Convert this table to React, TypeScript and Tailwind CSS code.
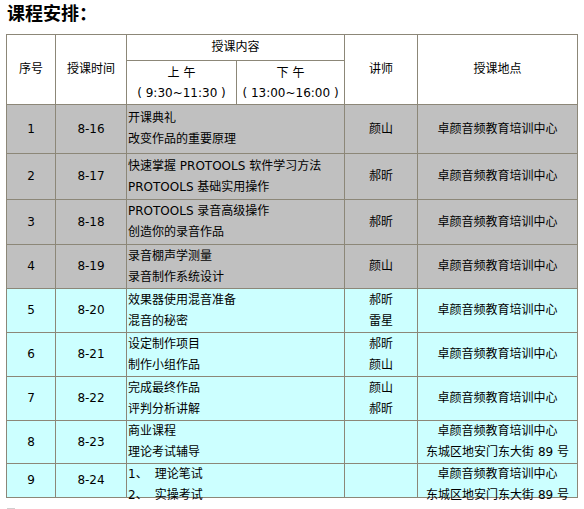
import type { ReactNode } from 'react';

type Row = {
  no: string;
  date: string;
  content: ReactNode[];
  teacher: string[];
  place: string[];
  height: string;
  bg: string;
};

const GRAY = 'bg-[#c0c0c0]';
const CYAN = 'bg-[#ccffff]';

const rows: Row[] = [
  { no: '1', date: '8-16', content: ['开课典礼', '改变作品的重要原理'], teacher: ['颜山'], place: ['卓颜音频教育培训中心'], height: 'h-[49px]', bg: GRAY },
  { no: '2', date: '8-17', content: ['快速掌握 PROTOOLS 软件学习方法', 'PROTOOLS 基础实用操作'], teacher: ['郝昕'], place: ['卓颜音频教育培训中心'], height: 'h-[46px]', bg: GRAY },
  { no: '3', date: '8-18', content: ['PROTOOLS 录音高级操作', '创造你的录音作品'], teacher: ['郝昕'], place: ['卓颜音频教育培训中心'], height: 'h-[45px]', bg: GRAY },
  { no: '4', date: '8-19', content: ['录音棚声学测量', '录音制作系统设计'], teacher: ['颜山'], place: ['卓颜音频教育培训中心'], height: 'h-[44px]', bg: GRAY },
  { no: '5', date: '8-20', content: ['效果器使用混音准备', '混音的秘密'], teacher: ['郝昕', '雷星'], place: ['卓颜音频教育培训中心'], height: 'h-[44px]', bg: CYAN },
  { no: '6', date: '8-21', content: ['设定制作项目', '制作小组作品'], teacher: ['郝昕', '颜山'], place: ['卓颜音频教育培训中心'], height: 'h-[44px]', bg: CYAN },
  { no: '7', date: '8-22', content: ['完成最终作品', '评判分析讲解'], teacher: ['颜山', '郝昕'], place: ['卓颜音频教育培训中心'], height: 'h-[44px]', bg: CYAN },
  { no: '8', date: '8-23', content: ['商业课程', '理论考试辅导'], teacher: [], place: ['卓颜音频教育培训中心', '东城区地安门东大街 89 号'], height: 'h-[43px]', bg: CYAN },
];

const cell = 'border border-[#8c8778] p-0 align-middle';

function Lines({ items }: { items: ReactNode[] }) {
  return (
    <>
      {items.map((t, i) => (
        <div key={i}>{t}</div>
      ))}
    </>
  );
}

export default function App() {
  return (
    <div className="bg-white w-[584px] h-[509px] overflow-hidden px-[6px] text-black font-['DejaVu_Sans','Noto_Sans_CJK_SC',sans-serif]">
      <h2 className="h-[24px] leading-[24px] pl-[1px] text-[18px] font-bold font-['Noto_Sans_CJK_SC',sans-serif]">
        课程安排：
      </h2>

      <table className="mt-[10px] w-[571px] table-fixed border-collapse border border-[#7e7a6c] text-[12px] leading-[21px]">
        <colgroup>
          <col className="w-[49px]" />
          <col className="w-[71px]" />
          <col className="w-[110px]" />
          <col className="w-[108px]" />
          <col className="w-[73px]" />
          <col className="w-[160px]" />
        </colgroup>
        <thead>
          <tr className="h-[26px] bg-white">
            <th rowSpan={2} className={`${cell} font-normal text-center`}>序号</th>
            <th rowSpan={2} className={`${cell} font-normal text-center`}>授课时间</th>
            <th colSpan={2} className={`${cell} font-normal text-center`}>授课内容</th>
            <th rowSpan={2} className={`${cell} font-normal text-center`}>讲师</th>
            <th rowSpan={2} className={`${cell} font-normal text-center`}>授课地点</th>
          </tr>
          <tr className="h-[44px] bg-white">
            <th className={`${cell} font-normal text-center leading-[20px]`}>
              <div>上 午</div>
              <div>( 9:30~11:30 )</div>
            </th>
            <th className={`${cell} font-normal text-center leading-[20px]`}>
              <div>下 午</div>
              <div>( 13:00~16:00 )</div>
            </th>
          </tr>
        </thead>
        <tbody>
          {rows.map((r) => (
            <tr key={r.no} className={`${r.height} ${r.bg}`}>
              <td className={`${cell} text-center`}>{r.no}</td>
              <td className={`${cell} text-center`}>{r.date}</td>
              <td colSpan={2} className={`${cell} px-[1px] text-left`}>
                <Lines items={r.content} />
              </td>
              <td className={`${cell} text-center`}>
                <Lines items={r.teacher} />
              </td>
              <td className={`${cell} text-center`}>
                <Lines items={r.place} />
              </td>
            </tr>
          ))}
          <tr className={`h-[34px] ${CYAN}`}>
            <td className={`${cell} text-center`}>9</td>
            <td className={`${cell} text-center`}>8-24</td>
            <td colSpan={2} className={`${cell} px-[1px] text-left align-top`}>
              <div className="h-[33px]">
                <div>
                  1、<span className="ml-[7px]">理论笔试</span>
                </div>
                <div>
                  2、<span className="ml-[7px]">实操考试</span>
                </div>
              </div>
            </td>
            <td className={cell}></td>
            <td className={`${cell} text-center align-top`}>
              <div className="h-[33px]">
                <div>卓颜音频教育培训中心</div>
                <div>东城区地安门东大街 89 号</div>
              </div>
            </td>
          </tr>
        </tbody>
      </table>
      <div className="mt-[10px] ml-[1px] w-[8px] h-[3px] bg-[#cfcfcf]" />
    </div>
  );
}
